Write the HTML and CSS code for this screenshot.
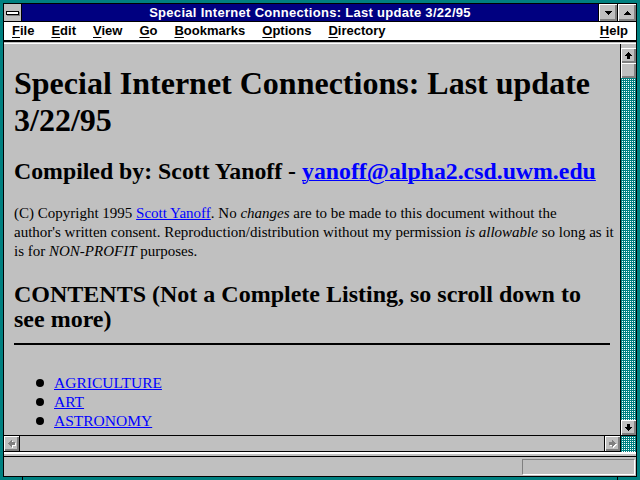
FILE: index.html
```html
<!DOCTYPE html>
<html>
<head>
<meta charset="utf-8">
<title>Special Internet Connections</title>
<link rel="stylesheet" href="styles.css">
</head>
<body>
<div class="window">
  <div class="frame">
    <div class="titlebar">
      <div class="sysmenu"><span class="sysbar"></span></div>
      <div class="title">Special Internet Connections: Last update 3/22/95</div>
      <div class="tbtn">
        <svg width="7" height="4" viewBox="0 0 7 4" shape-rendering="crispEdges"><rect x="0" y="0" width="7" height="1"/><rect x="1" y="1" width="5" height="1"/><rect x="2" y="2" width="3" height="1"/><rect x="3" y="3" width="1" height="1"/></svg>
      </div>
      <div class="tbtn">
        <svg width="7" height="4" viewBox="0 0 7 4" shape-rendering="crispEdges"><rect x="3" y="0" width="1" height="1"/><rect x="2" y="1" width="3" height="1"/><rect x="1" y="2" width="5" height="1"/><rect x="0" y="3" width="7" height="1"/></svg>
      </div>
    </div>
    <div class="menubar">
      <span class="mi"><u>F</u>ile</span>
      <span class="mi"><u>E</u>dit</span>
      <span class="mi"><u>V</u>iew</span>
      <span class="mi"><u>G</u>o</span>
      <span class="mi"><u>B</u>ookmarks</span>
      <span class="mi"><u>O</u>ptions</span>
      <span class="mi"><u>D</u>irectory</span>
      <span class="mi help"><u>H</u>elp</span>
    </div>
    <div class="sep"></div>
    <div class="pane">
      <div class="doc">
        <h1>Special Internet Connections: Last update 3/22/95</h1>
        <h2 class="compiled">Compiled by: Scott Yanoff - <a href="#">yanoff@alpha2.csd.uwm.edu</a></h2>
        <p class="copy">(C) Copyright 1995 <a href="#">Scott Yanoff</a>. No <i>changes</i> are to be made to this document without the<br>author's written consent. Reproduction/distribution without my permission <i>is allowable</i> so long as it<br>is for <i>NON-PROFIT</i> purposes.</p>
        <h2 class="contents">CONTENTS (Not a Complete Listing, so scroll down to see more)</h2>
        <hr class="rule">
        <ul class="toc">
          <li><a href="#">AGRICULTURE</a></li>
          <li><a href="#">ART</a></li>
          <li><a href="#">ASTRONOMY</a></li>
          <li><a href="#">AVIATION</a></li>
          <li><a href="#">BOOKS</a></li>
        </ul>
      </div>
      <div class="vscroll">
        <div class="vgap"></div>
        <div class="sbtn">
          <svg width="7" height="7" viewBox="0 0 7 7" shape-rendering="crispEdges"><rect x="3" y="0" width="1" height="1"/><rect x="2" y="1" width="3" height="1"/><rect x="1" y="2" width="5" height="1"/><rect x="0" y="3" width="7" height="1"/><rect x="2" y="4" width="3" height="3"/></svg>
        </div>
        <div class="sbtn thumb"></div>
        <div class="track"></div>
        <div class="sbtn">
          <svg width="7" height="7" viewBox="0 0 7 7" shape-rendering="crispEdges"><rect x="2" y="0" width="3" height="3"/><rect x="0" y="3" width="7" height="1"/><rect x="1" y="4" width="5" height="1"/><rect x="2" y="5" width="3" height="1"/><rect x="3" y="6" width="1" height="1"/></svg>
        </div>
      </div>
      <div class="hscroll">
        <div class="sbtn hleft">
          <svg width="8" height="8" viewBox="0 0 8 8" shape-rendering="crispEdges">
            <g fill="#fff" transform="translate(1,1)"><rect x="0" y="3" width="1" height="1"/><rect x="1" y="2" width="1" height="3"/><rect x="2" y="1" width="1" height="5"/><rect x="3" y="0" width="1" height="7"/><rect x="4" y="2" width="3" height="3"/></g>
            <g fill="#808080"><rect x="0" y="3" width="1" height="1"/><rect x="1" y="2" width="1" height="3"/><rect x="2" y="1" width="1" height="5"/><rect x="3" y="0" width="1" height="7"/><rect x="4" y="2" width="3" height="3"/></g>
          </svg>
        </div>
        <div class="htrack"></div>
        <div class="sbtn hright">
          <svg width="8" height="8" viewBox="0 0 8 8" shape-rendering="crispEdges">
            <g fill="#fff" transform="translate(1,1)"><rect x="6" y="3" width="1" height="1"/><rect x="5" y="2" width="1" height="3"/><rect x="4" y="1" width="1" height="5"/><rect x="3" y="0" width="1" height="7"/><rect x="0" y="2" width="3" height="3"/></g>
            <g fill="#808080"><rect x="6" y="3" width="1" height="1"/><rect x="5" y="2" width="1" height="3"/><rect x="4" y="1" width="1" height="5"/><rect x="3" y="0" width="1" height="7"/><rect x="0" y="2" width="3" height="3"/></g>
          </svg>
        </div>
      </div>
      <div class="corner"></div>
    </div>
    <div class="sep2"></div>
    <div class="status"><div class="statbox"></div></div>
  </div>
</div>
</body>
</html>
```
FILE: styles.css
```css
html, body {
  margin: 0;
  padding: 0;
}
body {
  width: 640px;
  height: 480px;
  overflow: hidden;
  background: #008080;
}
.window {
  box-sizing: border-box;
  width: 640px;
  height: 480px;
  padding: 3px;
  background:
    linear-gradient(#000, #000) 22px 100% / 1px 3px no-repeat,
    linear-gradient(#000, #000) 617px 100% / 1px 3px no-repeat,
    #008080;
}
.frame {
  box-sizing: border-box;
  height: 100%;
  border: 1px solid #000;
  display: flex;
  flex-direction: column;
  background: #c0c0c0;
}

/* title bar */
.titlebar {
  height: 17px;
  flex: none;
  display: flex;
  background: #000080;
  border-bottom: 1px solid #000;
}
.sysmenu {
  width: 17px;
  flex: none;
  background: #c0c0c0;
  border-right: 1px solid #000;
  display: flex;
  align-items: center;
  justify-content: center;
}
.sysbar {
  display: block;
  width: 11px;
  height: 2px;
  background: #fff;
  border: 1px solid #000;
  box-shadow: 1px 1px 0 #808080;
}
.title {
  flex: 1;
  text-align: center;
  color: #fff;
  font: bold 13px/17px "Liberation Sans", Arial, sans-serif;
  letter-spacing: 0.3px;
  white-space: nowrap;
  overflow: hidden;
}
.tbtn {
  width: 18px;
  flex: none;
  border-left: 1px solid #000;
  background: #c0c0c0;
  box-shadow: inset 1px 1px 0 #fff, inset -1px -1px 0 #808080, inset -2px -2px 0 #808080;
  display: flex;
  align-items: center;
  justify-content: center;
}
.tbtn svg, .sbtn svg {
  display: block;
  fill: #000;
}

/* menu bar */
.menubar {
  height: 18px;
  flex: none;
  display: flex;
  align-items: center;
  gap: 17px;
  padding: 0 8px;
  background: #fff;
  border-bottom: 2px solid #000;
  font: bold 13px/18px "Liberation Sans", Arial, sans-serif;
  color: #000;
}
.mi u {
  text-decoration-thickness: 1px;
  text-underline-offset: 2px;
}
.mi.help {
  margin-left: auto;
}
.sep {
  height: 1px;
  flex: none;
  background: #c0c0c0;
  border-bottom: 1px solid #fff;
}

/* document pane */
.pane {
  flex: 1;
  min-height: 0;
  display: grid;
  grid-template-columns: 1fr 16px;
  grid-template-rows: 1fr 17px;
}
.doc {
  overflow: hidden;
  padding: 0 10px;
  background: #c0c0c0;
  color: #000;
  font-family: "Liberation Serif", "Times New Roman", serif;
  font-size: 16px;
}
.doc a {
  color: #0000ff;
  text-decoration: underline;
  text-decoration-thickness: 1px;
}
.doc h1 {
  font-size: 32px;
  line-height: 37px;
  font-weight: bold;
  margin: 21px 0 0;
}
.doc h2 {
  font-size: 24px;
  font-weight: bold;
  margin: 0;
}
.compiled {
  font-size: 23.8px !important;
  line-height: 28px;
  margin-top: 18px !important;
}
.copy {
  font-size: 15px;
  line-height: 19px;
  white-space: nowrap;
  margin: 19px 0 0;
}
.contents {
  line-height: 25px;
  margin-top: 21px !important;
}
.rule {
  border: 0;
  height: 2px;
  background: #000;
  margin: 11px 0 0;
}
.toc {
  list-style: none;
  margin: 28px 0 0 22px;
  padding: 0;
  font-size: 15.5px;
}
.toc li {
  display: flex;
  align-items: center;
  line-height: 19px;
}
.toc li::before {
  content: "";
  width: 8px;
  height: 8px;
  border-radius: 50%;
  background: #000;
  margin-right: 10px;
  flex: none;
}

/* scrollbars */
.vscroll {
  border-left: 1px solid #000;
  display: flex;
  flex-direction: column;
  background: conic-gradient(from 90deg at 1px 1px, #fff 90deg, #008080 0) 0 0 / 2px 2px;
}
.vgap {
  height: 4px;
  background: #c0c0c0;
}
.sbtn {
  width: 15px;
  height: 15px;
  flex: none;
  background: #c0c0c0;
  box-shadow: inset 1px 1px 0 #fff, inset -1px -1px 0 #808080, inset -2px -2px 0 #808080;
  display: flex;
  align-items: center;
  justify-content: center;
}
.track {
  flex: 1;
}
.hscroll {
  border-top: 1px solid #000;
  border-bottom: 1px solid #000;
  display: flex;
}
.hleft {
  border-right: 1px solid #000;
}
.hright {
  border-left: 1px solid #000;
}
.htrack {
  flex: 1;
  background: #c0c0c0;
}
.corner {
  border-left: 1px solid #000;
  border-top: 1px solid #000;
  background: conic-gradient(from 90deg at 1px 1px, #fff 90deg, #008080 0) 0 0 / 2px 2px;
}
.sep2 {
  height: 2px;
  flex: none;
  border-top: 2px solid #fff;
  border-bottom: 1px solid #000;
  background: #c0c0c0;
}

/* status bar */
.status {
  height: 19px;
  flex: none;
  box-sizing: border-box;
  display: flex;
  justify-content: flex-end;
  padding: 2px 1px 1px 0;
  background: #c0c0c0;
}
.statbox {
  box-sizing: border-box;
  width: 113px;
  height: 16px;
  border-top: 1px solid #808080;
  border-left: 1px solid #808080;
  border-bottom: 1px solid #fff;
  border-right: 1px solid #fff;
}
```
